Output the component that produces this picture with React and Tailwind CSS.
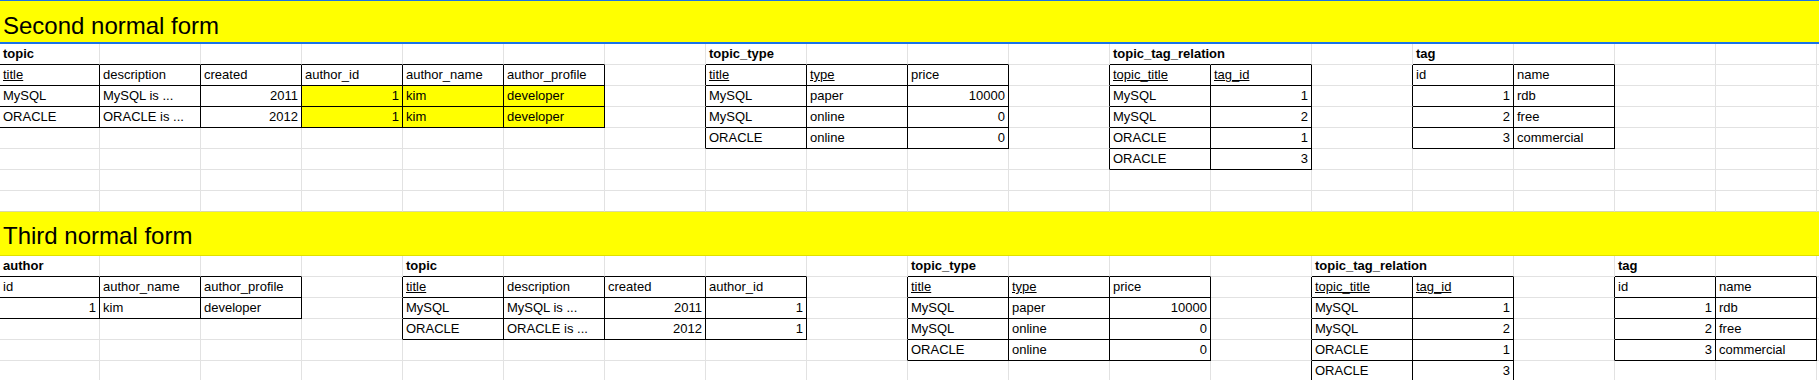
import React from 'react';

const NCOLS = 19;
const NROWS = 16;

const tt = (r, c) => ({
  r, c, name: 'topic_type', head: ['title', 'type', 'price'], u: [0, 1],
  data: [['MySQL', 'paper', 10000], ['MySQL', 'online', 0], ['ORACLE', 'online', 0]],
});
const ttr = (r, c) => ({
  r, c, name: 'topic_tag_relation', head: ['topic_title', 'tag_id'], u: [0, 1],
  data: [['MySQL', 1], ['MySQL', 2], ['ORACLE', 1], ['ORACLE', 3]], span: true,
});
const tag = (r, c) => ({
  r, c, name: 'tag', head: ['id', 'name'], u: [],
  data: [[1, 'rdb'], [2, 'free'], [3, 'commercial']],
});

const tables = [
  {
    r: 1, c: 0, name: 'topic',
    head: ['title', 'description', 'created', 'author_id', 'author_name', 'author_profile'], u: [0],
    data: [
      ['MySQL', 'MySQL is ...', 2011, 1, 'kim', 'developer'],
      ['ORACLE', 'ORACLE is ...', 2012, 1, 'kim', 'developer'],
    ],
    yellow: [3, 4, 5],
  },
  tt(1, 7),
  ttr(1, 11),
  tag(1, 14),
  {
    r: 10, c: 0, name: 'author', head: ['id', 'author_name', 'author_profile'], u: [],
    data: [[1, 'kim', 'developer']],
  },
  {
    r: 10, c: 4, name: 'topic', head: ['title', 'description', 'created', 'author_id'], u: [0],
    data: [['MySQL', 'MySQL is ...', 2011, 1], ['ORACLE', 'ORACLE is ...', 2012, 1]],
  },
  tt(10, 9),
  ttr(10, 13),
  tag(10, 16),
];

function buildGrid() {
  const g = Array.from({ length: NROWS + 1 }, () =>
    Array.from({ length: NCOLS + 1 }, () => ({ text: '', inT: false }))
  );
  tables.forEach((t) => {
    g[t.r][t.c] = { ...g[t.r][t.c], text: t.name, bold: true };
    if (t.span) g[t.r][t.c].noR = true;
    t.head.forEach((h, i) => {
      g[t.r + 1][t.c + i] = { text: h, inT: true, u: t.u.includes(i) };
    });
    t.data.forEach((row, j) => {
      row.forEach((v, i) => {
        g[t.r + 2 + j][t.c + i] = {
          text: String(v),
          inT: true,
          right: typeof v === 'number',
          yellow: t.yellow ? t.yellow.includes(i) : false,
        };
      });
    });
  });
  return g;
}

const grid = buildGrid();
const inT = (r, c) => (grid[r] && grid[r][c] ? grid[r][c].inT : false);

function Cell({ r, c }) {
  const cell = grid[r][c];
  const blackR = inT(r, c) || inT(r, c + 1);
  const blackB = inT(r, c) || inT(r + 1, c);
  const cls = [
    'shrink-0 h-full border-r border-b px-[3px] leading-[20px] whitespace-nowrap',
    c === 0 ? 'w-[100px]' : 'w-[101px]',
    blackR ? 'border-r-black' : cell.noR ? 'border-r-transparent' : 'border-r-[#e2e2e2]',
    blackB ? 'border-b-black' : r === 8 ? 'border-b-[#d9d9a6]' : 'border-b-[#e2e2e2]',
    cell.yellow ? 'bg-[#ffff00]' : '',
    cell.right ? 'text-right' : '',
    cell.bold ? 'font-bold' : '',
    cell.u ? 'underline' : '',
  ].join(' ');
  return <div className={cls}>{cell.text}</div>;
}

function Row({ r }) {
  return (
    <div className="flex h-[21px]">
      {Array.from({ length: NCOLS }, (_, c) => (
        <Cell key={c} r={r} c={c} />
      ))}
    </div>
  );
}

export default function App() {
  const rows = [];
  for (let r = 0; r < NROWS; r++) {
    if (r === 0) {
      rows.push(
        <div
          key={r}
          className="h-[44px] bg-[#ffff00] border-t border-b-2 border-[#1a73e8] pl-[3px] pt-[11px] text-[24px] leading-[28px] whitespace-nowrap"
        >
          Second normal form
        </div>
      );
    } else if (r === 9) {
      rows.push(
        <div
          key={r}
          className="h-[44px] bg-[#ffff00] border-b border-[#e0e000] pl-[3px] pt-[10px] text-[24px] leading-[28px] whitespace-nowrap"
        >
          Third normal form
        </div>
      );
    } else {
      rows.push(<Row key={r} r={r} />);
    }
  }
  return (
    <div className="w-[1819px] h-[380px] overflow-hidden bg-white text-black text-[13px] font-['Liberation_Sans',Arial,sans-serif]">
      {rows}
    </div>
  );
}
